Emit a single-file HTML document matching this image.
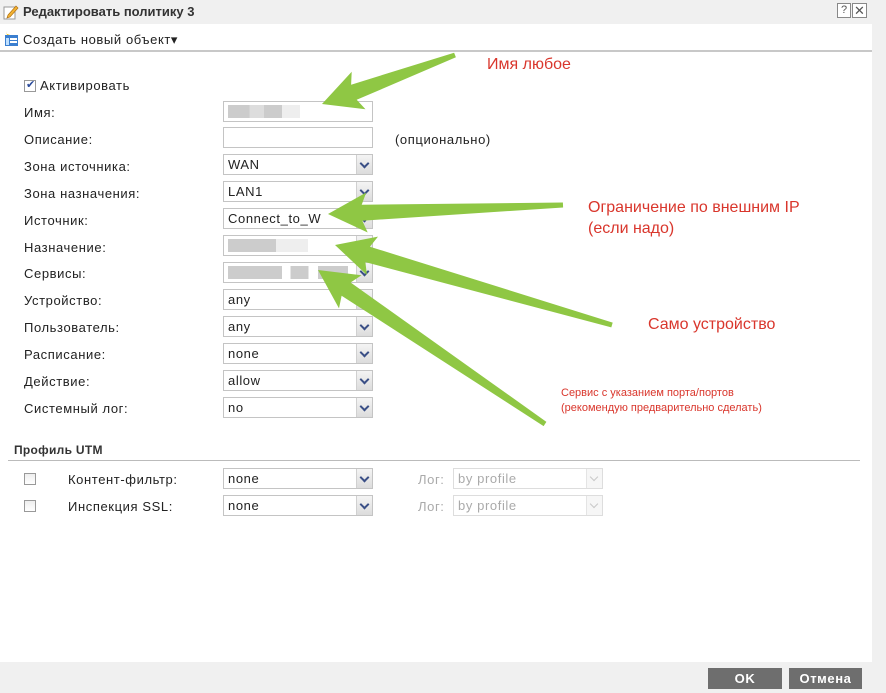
<!DOCTYPE html>
<html><head><meta charset="utf-8"><style>
*{margin:0;padding:0;box-sizing:border-box}
body{width:886px;height:693px;position:relative;background:#fff;font-family:"Liberation Sans","DejaVu Sans",sans-serif;font-size:13px;color:#222;overflow:hidden;letter-spacing:0.6px}
.a{position:absolute;white-space:nowrap}
.inp{position:absolute;left:223px;width:150px;height:21px;border:1px solid #c4c4c4;background:#fff;padding-left:4px;line-height:19px;font-size:13px}
.sel .b{position:absolute;right:0;top:0;width:16px;height:19px;background:linear-gradient(#f4f4f4,#dcdcdc);border-left:1px solid #d0d0d0}
.sel .b:after{content:"";position:absolute;left:4px;top:5px;width:5px;height:5px;border-right:2px solid #3a4f86;border-bottom:2px solid #3a4f86;transform:rotate(45deg)}
.dis{color:#aaa;border-color:#ddd}
.dis .b{background:#f6f6f6;border-left-color:#e4e4e4}
.dis .b:after{border-color:#c8c8c8;border-width:0 1px 1px 0}
.lbl{position:absolute;left:24px;font-size:13px}
.blur{position:absolute;top:3px;height:13px;background:#ccc}
.cb{position:absolute;width:12px;height:12px;border:1px solid #999;background:linear-gradient(#eee,#fff)}
.red{color:#d9362c;letter-spacing:0}
.btn{position:absolute;top:668px;height:21px;background:#6e6e6e;color:#fff;font-weight:bold;text-align:center;line-height:21px;font-size:13px}
</style></head><body>
<div class="a" style="left:0;top:0;width:886px;height:24px;background:#f0f0f0"></div>
<svg class="a" style="left:3px;top:4px" width="16" height="16"><rect x="1" y="3" width="11" height="12" fill="#fff" stroke="#999"/><path d="M5 11 L13 2 L15 4 L7 13 L4 14Z" fill="#f2b233" stroke="#b07010" stroke-width=".7"/></svg>
<div class="a" style="left:23px;top:4px;font-weight:bold;font-size:13px;color:#333;letter-spacing:0">Редактировать политику 3</div>
<div class="a" style="left:837px;top:3px;width:14px;height:15px;border:1px solid #888;background:#fff;font-size:11px;text-align:center;line-height:13px;color:#555;letter-spacing:0">?</div>
<div class="a" style="left:852px;top:3px;width:15px;height:15px;border:1px solid #888;background:#fff;font-size:13px;text-align:center;line-height:13px;color:#555;letter-spacing:0">✕</div>
<div class="a" style="left:872px;top:24px;width:14px;height:669px;background:#f0f0f0"></div>
<svg class="a" style="left:4px;top:31px" width="16" height="16"><rect x="1" y="4" width="13" height="11" fill="#3b7fd0"/><rect x="6" y="7" width="7" height="2" fill="#fff"/><rect x="6" y="10" width="7" height="2" fill="#fff"/><rect x="2" y="7" width="3" height="7" fill="#bfe0ff"/><path d="M2 0 L3 3 L6 3 L3 4" fill="#f5c000"/></svg>
<div class="a" style="left:23px;top:32px;font-size:13px">Создать новый объект▾</div>
<div class="a" style="left:0;top:50px;width:872px;height:2px;background:#c8c8c8"></div>

<div class="cb" style="left:24px;top:80px;background:#fff"><span style="position:absolute;left:1px;top:-3px;font-size:11px;color:#2a4a9a">✔</span></div>
<div class="a" style="left:40px;top:78px">Активировать</div>

<div class="lbl" style="top:105px">Имя:</div>
<div class="lbl" style="top:132px">Описание:</div>
<div class="lbl" style="top:159px">Зона источника:</div>
<div class="lbl" style="top:186px">Зона назначения:</div>
<div class="lbl" style="top:213px">Источник:</div>
<div class="lbl" style="top:240px">Назначение:</div>
<div class="lbl" style="top:266px">Сервисы:</div>
<div class="lbl" style="top:293px">Устройство:</div>
<div class="lbl" style="top:320px">Пользователь:</div>
<div class="lbl" style="top:347px">Расписание:</div>
<div class="lbl" style="top:374px">Действие:</div>
<div class="lbl" style="top:401px">Системный лог:</div>

<div class="inp" style="top:101px"><div class="blur" style="left:4px;width:72px;background:linear-gradient(90deg,#ccc 0 30%,#ddd 30% 50%,#ccc 50% 75%,#eee 75%)"></div></div>
<div class="inp" style="top:127px"></div>
<div class="a" style="left:395px;top:132px">(опционально)</div>
<div class="inp sel" style="top:154px">WAN<div class="b"></div></div>
<div class="inp sel" style="top:181px">LAN1<div class="b"></div></div>
<div class="inp sel" style="top:208px">Connect_to_W<div class="b"></div></div>
<div class="inp sel" style="top:235px"><div class="blur" style="left:4px;width:80px;background:linear-gradient(90deg,#ccc 0 60%,#eee 60%)"></div><div class="b"></div></div>
<div class="inp sel" style="top:262px"><div class="blur" style="left:4px;width:120px;background:linear-gradient(90deg,#ccc 0 45%,#fff 45% 52%,#ccc 52% 67%,#fff 67% 75%,#ccc 75%)"></div><div class="b"></div></div>
<div class="inp sel" style="top:289px">any<div class="b"></div></div>
<div class="inp sel" style="top:316px">any<div class="b"></div></div>
<div class="inp sel" style="top:343px">none<div class="b"></div></div>
<div class="inp sel" style="top:370px">allow<div class="b"></div></div>
<div class="inp sel" style="top:397px">no<div class="b"></div></div>

<div class="a" style="left:14px;top:443px;font-weight:bold;font-size:12px;color:#333;letter-spacing:0.3px">Профиль UTM</div>
<div class="a" style="left:8px;top:460px;width:852px;height:1px;background:#bbb"></div>
<div class="cb" style="left:24px;top:473px"></div>
<div class="a" style="left:68px;top:472px">Контент-фильтр:</div>
<div class="inp sel" style="top:468px">none<div class="b"></div></div>
<div class="a" style="left:418px;top:472px;color:#aaa">Лог:</div>
<div class="inp sel dis" style="top:468px;left:453px">by profile<div class="b"></div></div>
<div class="cb" style="left:24px;top:500px"></div>
<div class="a" style="left:68px;top:499px">Инспекция SSL:</div>
<div class="inp sel" style="top:495px">none<div class="b"></div></div>
<div class="a" style="left:418px;top:499px;color:#aaa">Лог:</div>
<div class="inp sel dis" style="top:495px;left:453px">by profile<div class="b"></div></div>

<div class="a" style="left:0;top:662px;width:886px;height:31px;background:#f0f0f0"></div>
<div class="btn" style="left:708px;width:74px">OK</div>
<div class="btn" style="left:789px;width:73px">Отмена</div>

<div class="a red" style="left:487px;top:56px;font-size:16px">Имя любое</div>
<div class="a red" style="left:588px;top:197px;font-size:16px;line-height:21px">Ограничение по внешним IP<br>(если надо)</div>
<div class="a red" style="left:648px;top:316px;font-size:16px">Само устройство</div>
<div class="a red" style="left:561px;top:386px;font-size:11px;line-height:15px">Сервис с указанием порта/портов<br>(рекомендую предварительно сделать)</div>

<svg class="a" style="left:0;top:0" width="886" height="693" id="arr"></svg>
<script>
var arrows=[[455,55,322,104],[563,205,328,214],[612,325,335,245],[545,424,318,270]];
var s=document.getElementById('arr'),h='';
arrows.forEach(function(a){
var tx=a[0],ty=a[1],px=a[2],py=a[3],dx=px-tx,dy=py-ty,L=Math.hypot(dx,dy),ux=dx/L,uy=dy/L,nx=-uy,ny=ux;
var hl=34,hw=20,sw=8,tw=2.5;
var bx=px-ux*hl,by=py-uy*hl;
var pts=[[tx+nx*tw,ty+ny*tw],[bx+nx*sw,by+ny*sw],[bx+nx*hw-ux*5,by+ny*hw-uy*5],[px,py],[bx-nx*hw-ux*5,by-ny*hw-uy*5],[bx-nx*sw,by-ny*sw],[tx-nx*tw,ty-ny*tw]];
h+='<polygon fill="#8fc744" points="'+pts.map(function(p){return p[0].toFixed(1)+','+p[1].toFixed(1)}).join(' ')+'"/>';
});
s.innerHTML=h;
</script>
</body></html>
